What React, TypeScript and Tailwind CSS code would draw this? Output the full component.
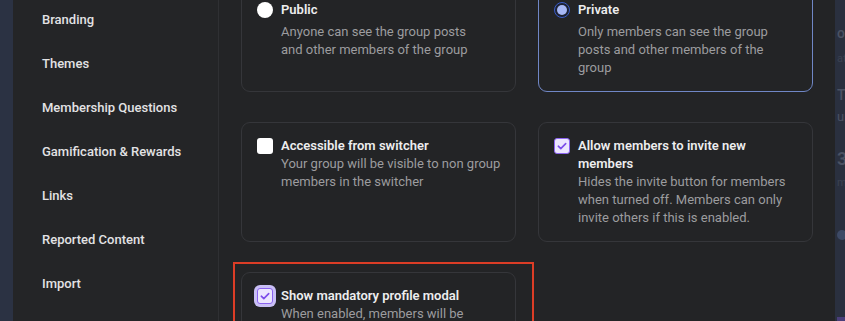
import React from "react";

const navItems = [
  "Branding",
  "Themes",
  "Membership Questions",
  "Gamification & Rewards",
  "Links",
  "Reported Content",
  "Import",
];

function Check() {
  return (
    <svg width="12" height="12" viewBox="0 0 12 12" fill="none">
      <path d="M2.3 6.2 L4.8 8.6 L9.7 3.6" stroke="#7c4dea" strokeWidth="1.6" strokeLinecap="round" strokeLinejoin="round" />
    </svg>
  );
}

function CheckedBox({ focus }: { focus?: boolean }) {
  return (
    <div
      className={
        "mt-[1px] flex h-4 w-4 shrink-0 items-center justify-center rounded-[3px] border-[1.5px] border-[#8b63f0] bg-[#ece6ff] " +
        (focus ? "ring-[3px] ring-[#c9bff6]" : "")
      }
    >
      <Check />
    </div>
  );
}

export default function App() {
  return (
    <div
      className="flex h-[321px] w-[845px] overflow-hidden bg-[#2a303e]"
      style={{ fontFamily: "Roboto, 'Liberation Sans', sans-serif" }}
    >
      <div className="w-[13px] shrink-0 bg-[#2b3243]" />
      <div className="flex w-[822px] shrink-0 bg-[#232426]">
        <aside className="w-[206px] shrink-0 border-r border-[#2f3033] bg-[#242527] pl-[29px]">
          <div className="-mt-[2px] flex flex-col">
            {navItems.map((n) => (
              <div key={n} className="flex h-[44px] items-center text-[13px] font-medium text-[#e2e2e4]">
                {n}
              </div>
            ))}
          </div>
        </aside>
        <main className="flex-1 px-[22px]">
          <div className="-mt-[14px] grid grid-cols-[275px_275px] gap-x-[22px] gap-y-[30px]">
            {/* Public */}
            <div className="rounded-[9px] border border-[#35363a] bg-[#232426] py-[14px] pl-[15px] pr-[14px]">
              <div className="flex gap-2">
                <div className="mt-[1px] h-4 w-4 shrink-0 rounded-full bg-white" />
                <div className="w-[200px]">
                  <div className="text-[13px] font-semibold leading-[18px] text-[#ededee]">Public</div>
                  <div className="mt-[4px] text-[13px] leading-[18px] text-[#9c9c9f]">
                    Anyone can see the group posts and other members of the group
                  </div>
                </div>
              </div>
            </div>
            {/* Private */}
            <div className="rounded-[9px] border border-[#7087c6] bg-[#232426] py-[14px] pl-[15px] pr-[14px]">
              <div className="flex gap-2">
                <div className="mt-[1px] flex h-4 w-4 shrink-0 items-center justify-center rounded-full border-[1.5px] border-[#3a5cc8] bg-[#1d2233]">
                  <div className="h-[10px] w-[10px] rounded-full bg-[#a7b8f6]" />
                </div>
                <div className="w-[200px]">
                  <div className="text-[13px] font-semibold leading-[18px] text-[#ededee]">Private</div>
                  <div className="mt-[4px] text-[13px] leading-[18px] text-[#9c9c9f]">
                    Only members can see the group posts and other members of the group
                  </div>
                </div>
              </div>
            </div>
            {/* Accessible */}
            <div className="rounded-[9px] border border-[#35363a] bg-[#232426] py-[14px] pl-[15px] pr-[6px]">
              <div className="flex gap-2">
                <div className="mt-[1px] h-4 w-4 shrink-0 rounded-[3px] bg-white" />
                <div className="w-[228px]">
                  <div className="text-[13px] font-semibold leading-[18px] text-[#ededee]">Accessible from switcher</div>
                  <div className="text-[13px] leading-[18px] text-[#9c9c9f]">
                    Your group will be visible to non group members in the switcher
                  </div>
                </div>
              </div>
            </div>
            {/* Allow invite */}
            <div className="rounded-[9px] border border-[#35363a] bg-[#232426] py-[14px] pl-[15px] pr-[14px]">
              <div className="flex gap-2">
                <CheckedBox />
                <div className="w-[214px]">
                  <div className="text-[13px] font-semibold leading-[18px] text-[#ededee]">
                    Allow members to invite new members
                  </div>
                  <div className="text-[13px] leading-[18px] text-[#9c9c9f]">
                    Hides the invite button for members when turned off. Members can only invite others if this is enabled.
                  </div>
                </div>
              </div>
            </div>
            {/* Mandatory profile */}
            <div className="relative">
              <div className="pointer-events-none absolute -left-[8px] -right-[18px] -top-[10px] h-[200px] border-2 border-[#dc3d26]" />
              <div className="rounded-[9px] border border-[#35363a] bg-[#232426] py-[14px] pl-[15px] pr-[14px]">
                <div className="flex gap-2">
                  <CheckedBox focus />
                  <div className="w-[219px]">
                    <div className="text-[13px] font-semibold leading-[18px] text-[#ededee]">
                      Show mandatory profile modal
                    </div>
                    <div className="text-[13px] leading-[18px] text-[#9c9c9f]">
                      When enabled, members will be asked to complete their profile
                    </div>
                  </div>
                </div>
              </div>
            </div>
          </div>
        </main>
      </div>
      <div className="flex flex-1 flex-col overflow-hidden bg-[#2a303f] pl-[2px] text-[#4b5263]">
        <div className="mt-[24px] whitespace-nowrap text-[14px] font-medium leading-[18px]">ou</div>
        <div className="mt-[10px] whitespace-nowrap text-[11px] leading-[14px] text-[#3b4252]">at</div>
        <div className="mt-[20px] whitespace-nowrap text-[14px] font-medium leading-[18px]">T</div>
        <div className="mt-[4px] whitespace-nowrap text-[13px] leading-[18px]">ur</div>
        <div className="mt-[22px] whitespace-nowrap text-[18px] font-semibold leading-[22px]">30</div>
        <div className="mt-[6px] whitespace-nowrap text-[11px] leading-[14px] text-[#3b4252]">mi</div>
        <div className="mt-[40px] h-[10px] w-[10px] rounded-full bg-[#3d4a66]" />
        <div className="mt-auto h-[4px] w-full bg-[#4a3e7a]" />
      </div>
    </div>
  );
}
